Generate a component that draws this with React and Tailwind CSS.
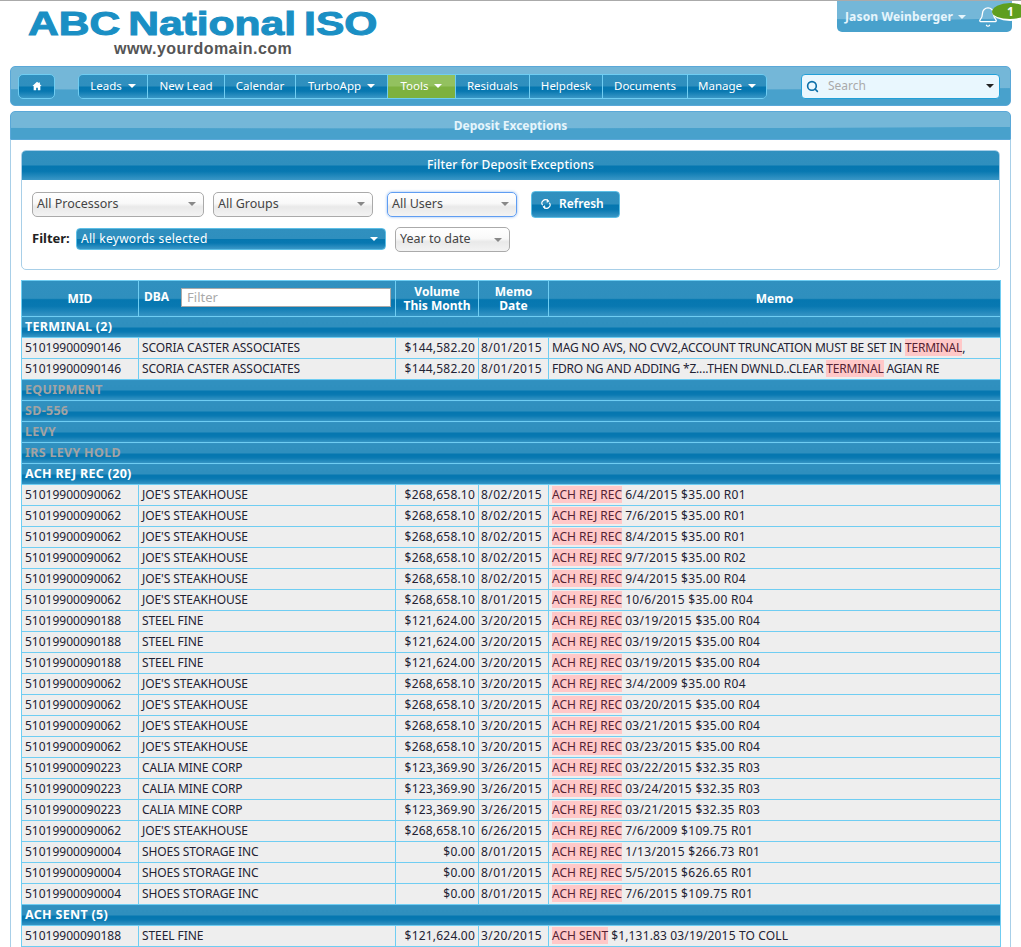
import { Bell, Search } from 'lucide-react';

const gloss = 'bg-[linear-gradient(180deg,#3090bf_0%,#2f8fbe_48%,#0577b0_52%,#0878b1_70%,#3a97c6_100%)]';
const wave = 'bg-[radial-gradient(ellipse_150%_62%_at_40%_0%,#74b7d8_96%,#48a1cc_100%)]';

const navItems = [
  { label: 'Leads', w: 'w-[68px]', caret: true },
  { label: 'New Lead', w: 'w-[77px]' },
  { label: 'Calendar', w: 'w-[71px]' },
  { label: 'TurboApp', w: 'w-[92px]', caret: true },
  { label: 'Tools', w: 'w-[68px]', caret: true, active: true },
  { label: 'Residuals', w: 'w-[74px]' },
  { label: 'Helpdesk', w: 'w-[73px]' },
  { label: 'Documents', w: 'w-[85px]' },
  { label: 'Manage', w: 'w-[79px]', caret: true },
];

const joe = ['51019900090062', "JOE'S STEAKHOUSE", '$268,658.10'];
const steel = ['51019900090188', 'STEEL FINE', '$121,624.00'];
const calia = ['51019900090223', 'CALIA MINE CORP', '$123,369.90'];
const shoes = ['51019900090004', 'SHOES STORAGE INC', '$0.00'];

const achRows = [
  [joe, '8/02/2015', '6/4/2015 $35.00 R01'],
  [joe, '8/02/2015', '7/6/2015 $35.00 R01'],
  [joe, '8/02/2015', '8/4/2015 $35.00 R01'],
  [joe, '8/02/2015', '9/7/2015 $35.00 R02'],
  [joe, '8/02/2015', '9/4/2015 $35.00 R04'],
  [joe, '8/01/2015', '10/6/2015 $35.00 R04'],
  [steel, '3/20/2015', '03/19/2015 $35.00 R04'],
  [steel, '3/20/2015', '03/19/2015 $35.00 R04'],
  [steel, '3/20/2015', '03/19/2015 $35.00 R04'],
  [joe, '3/20/2015', '3/4/2009 $35.00 R04'],
  [joe, '3/20/2015', '03/20/2015 $35.00 R04'],
  [joe, '3/20/2015', '03/21/2015 $35.00 R04'],
  [joe, '3/20/2015', '03/23/2015 $35.00 R04'],
  [calia, '3/26/2015', '03/22/2015 $32.35 R03'],
  [calia, '3/26/2015', '03/24/2015 $32.35 R03'],
  [calia, '3/26/2015', '03/21/2015 $32.35 R03'],
  [joe, '6/26/2015', '7/6/2009 $109.75 R01'],
  [shoes, '8/01/2015', '1/13/2015 $266.73 R01'],
  [shoes, '8/01/2015', '5/5/2015 $626.65 R01'],
  [shoes, '8/01/2015', '7/6/2015 $109.75 R01'],
];

function Caret({ className = 'border-t-white' }) {
  return <span className={`inline-block w-0 h-0 border-x-[4px] border-x-transparent border-t-[4px] ${className}`} />;
}

function Select({ label, w, focus }) {
  return (
    <div className={`${w} h-[25px] flex items-center justify-between pl-[4px] pr-[7px] rounded-[5px] border text-[12.5px] text-[#444] bg-[linear-gradient(180deg,#ffffff_0%,#f9f9f9_45%,#e9e9e9_60%,#f3f3f3_100%)] ${focus ? 'border-[#5f9df2] shadow-[0_0_3px_#8fb8f0]' : 'border-[#aaaaaa]'}`}>
      <span>{label}</span>
      <Caret className="border-t-[#888888]" />
    </div>
  );
}

function Group({ label, muted }) {
  return (
    <tr className="h-[21px]">
      <td colSpan={5} className={`${gloss} border border-[#6fcdf2] px-[3px] py-0 font-bold text-[12.5px] tracking-[0.3px] leading-none ${muted ? 'text-[#a3a3a3]' : 'text-white'}`}>
        {label}
      </td>
    </tr>
  );
}

function Row({ mid, dba, volume, date, rest }) {
  const cell = 'border border-[#6fcdf2] py-0 overflow-hidden whitespace-nowrap';
  return (
    <tr className="h-[21px] bg-[#eeeeee] text-[#222233]">
      <td className={`${cell} px-[3px]`}>{mid}</td>
      <td className={`${cell} px-[3px] tracking-[-0.08px]`}>{dba}</td>
      <td className={`${cell} px-[3px] text-right tracking-[0.2px]`}>{volume}</td>
      <td className={`${cell} pl-[2px] tracking-[0.45px]`}>{date}</td>
      <td className={`${cell} px-[3px]`}>{rest}</td>
    </tr>
  );
}

const Hit = ({ children }) => <span className="bg-[#ffc8c8] text-[#552233]">{children}</span>;

export default function App() {
  return (
    <div className="h-[947px] overflow-hidden bg-white border-t border-t-[#aaaaaa] font-['Noto_Sans','DejaVu_Sans',sans-serif] text-[12px]">
      <div className="flex h-[65px] pl-[28px] pr-[9px]">
        <div className="pt-[7px]">
          <div className="font-['Liberation_Sans',sans-serif] font-bold text-[#1a8fc4] text-[33px] leading-[32px] [word-spacing:-3px] [-webkit-text-stroke:1px_#1a8fc4] origin-left scale-x-[1.29] whitespace-nowrap">ABC National ISO</div>
          <div className="font-['Liberation_Sans',sans-serif] font-bold text-[#555555] text-[16px] leading-[18px] tracking-[0.45px] ml-[86px]">www.yourdomain.com</div>
        </div>
        <div className={`${wave} relative ml-auto w-[175px] h-[31px] rounded-b-[5px] pl-[8px] flex items-center gap-[5px] text-[#e6f5fc] font-bold`}>
          <span className="tracking-[0.15px]">Jason Weinberger</span>
          <Caret className="border-t-[#e6f5fc]" />
          <Bell className="w-[22px] h-[22px] ml-[6px] text-white" strokeWidth={1.4} />
          <span className="absolute left-[155px] top-[2px] w-[36px] h-[18px] rounded-[50%] border-b-2 border-b-white bg-[#5f9e1e] text-white font-bold text-[12px] leading-[18px] pl-[15px]">1</span>
        </div>
      </div>

      <div className="mx-[10px]">
        <div className={`${wave} h-[40px] rounded-[5px] border border-[#5aa8d8] flex items-center pl-[7px] pr-[10px]`}>
          <div className={`${gloss} w-[37px] h-[25px] rounded-[5px] border border-[#6fcdf2] flex items-center justify-center`}>
            <svg viewBox="0 0 12 12" className="w-[10px] h-[10px] fill-white">
              <path d="M6 1 0.5 6h1.5v5h3V8h2v3h3V6h1.5L9.5 3.8V1.8H8v.7z" />
            </svg>
          </div>
          <div className="ml-[23px] flex h-[25px] rounded-[5px] border border-[#6fcdf2] overflow-hidden">
            {navItems.map((item, i) => (
              <div
                key={item.label}
                className={`${item.w} flex items-center justify-center gap-[6px] text-white text-[11.5px] ${i > 0 ? 'border-l border-l-[#6fcdf2]' : ''} ${item.active ? 'bg-[linear-gradient(180deg,#93c15f_0%,#93c15f_48%,#7db13f_52%,#7db13f_100%)]' : gloss}`}
              >
                {item.label}
                {item.caret && <Caret />}
              </div>
            ))}
          </div>
          <div className="ml-auto w-[199px] h-[25px] rounded-[4px] border border-[#22a0d8] bg-[#e9f7fe] flex items-center pl-[4px] pr-[5px] text-[#aaaaaa]">
            <Search className="w-[13px] h-[13px] text-[#0a6ea8]" strokeWidth={3} />
            <span className="ml-[9px]">Search</span>
            <Caret className="ml-auto border-t-[#222222]" />
          </div>
        </div>

        <div className={`${wave} mt-[5px] h-[29px] rounded-t-[5px] border border-[#5aa8d8] flex items-center justify-center font-bold text-[#e6f5fc]`}>
          Deposit Exceptions
        </div>

        <div className="border-x border-x-[#a8cfe8] px-[10px] pt-[10px]">
          <div className="h-[120px] rounded-[5px] border border-[#a8cfe8] overflow-hidden">
            <div className={`${gloss} h-[29px] pb-[2px] flex items-center justify-center text-white font-medium tracking-[0.2px]`}>Filter for Deposit Exceptions</div>
            <div className="pl-[10px] pt-[10px]">
              <div className="flex items-center h-[28px]">
                <Select label="All Processors" w="w-[172px]" />
                <div className="w-[9px]" />
                <Select label="All Groups" w="w-[160px]" />
                <div className="w-[14px]" />
                <Select label="All Users" w="w-[130px]" focus />
                <div className={`${gloss} ml-[14px] w-[89px] h-[27px] rounded-[4px] border border-[#5dbfe6] flex items-center pl-[9px] gap-[8px] text-white font-semibold`}>
                  <svg viewBox="0 0 12 12" className="w-[10px] h-[10px] stroke-white fill-none" strokeWidth="1.4">
                    <path d="M2 7.5A4 4 0 0 1 8.5 2.5M10 4.5A4 4 0 0 1 3.5 9.5" />
                    <path d="M7 0.5 9 2.5 6.8 4M5 8 3 9.5 5.2 11.5" />
                  </svg>
                  Refresh
                </div>
              </div>
              <div className="flex items-center h-[25px] mt-[9px]">
                <span className="font-bold text-[13px] text-[#222222] w-[44px] mb-[2px]">Filter:</span>
                <div className={`${gloss} w-[310px] h-[22px] mb-[2px] rounded-[4px] border border-[#5dbfe6] flex items-center justify-between pl-[4px] pr-[7px] text-white tracking-[0.3px]`}>
                  All keywords selected
                  <Caret />
                </div>
                <div className="w-[9px]" />
                <Select label="Year to date" w="w-[115px]" />
              </div>
            </div>
          </div>

          <table className="mt-[10px] w-[980px] table-fixed border-collapse">
            <colgroup>
              <col className="w-[117px]" />
              <col className="w-[257px]" />
              <col className="w-[83px]" />
              <col className="w-[70px]" />
              <col />
            </colgroup>
            <thead>
              <tr className={`${gloss} h-[36px] text-white font-bold leading-[14px]`}>
                <th className="border border-[#6fcdf2] p-0">MID</th>
                <th className="border border-[#6fcdf2] p-0 pl-[5px] pr-[4px]">
                  <div className="flex items-center pb-[3px]">
                    <span>DBA</span>
                    <input
                      readOnly
                      placeholder="Filter"
                      className="ml-[12px] w-[211px] h-[19px] bg-white border border-[#aaaaaa] px-[5px] font-normal text-[13px] text-[#333333] placeholder:text-[#aaaaaa] outline-none"
                    />
                  </div>
                </th>
                <th className="border border-[#6fcdf2] p-0">Volume<br />This Month</th>
                <th className="border border-[#6fcdf2] p-0">Memo<br />Date</th>
                <th className="border border-[#6fcdf2] p-0">Memo</th>
              </tr>
            </thead>
            <tbody>
              <Group label="TERMINAL (2)" />
              <Row
                mid="51019900090146"
                dba="SCORIA CASTER ASSOCIATES"
                volume="$144,582.20"
                date="8/01/2015"
                rest={<span className="tracking-[-0.2px]">MAG NO AVS, NO CVV2,ACCOUNT TRUNCATION MUST BE SET IN <Hit>TERMINAL</Hit>,</span>}
              />
              <Row
                mid="51019900090146"
                dba="SCORIA CASTER ASSOCIATES"
                volume="$144,582.20"
                date="8/01/2015"
                rest={<span className="tracking-[-0.2px]">FDRO NG AND ADDING *Z....THEN DWNLD..CLEAR <Hit>TERMINAL</Hit> AGIAN RE</span>}
              />
              <Group label="EQUIPMENT" muted />
              <Group label="SD-556" muted />
              <Group label="LEVY" muted />
              <Group label="IRS LEVY HOLD" muted />
              <Group label="ACH REJ REC (20)" />
              {achRows.map(([m, date, text], i) => (
                <Row
                  key={i}
                  mid={m[0]}
                  dba={m[1]}
                  volume={m[2]}
                  date={date}
                  rest={<><Hit>ACH REJ REC</Hit> <span className="tracking-[0.3px]">{text}</span></>}
                />
              ))}
              <Group label="ACH SENT (5)" />
              <Row
                mid={steel[0]}
                dba={steel[1]}
                volume={steel[2]}
                date="3/20/2015"
                rest={<><Hit>ACH SENT</Hit> <span className="tracking-[0.15px]">$1,131.83 03/19/2015 TO COLL</span></>}
              />
            </tbody>
          </table>
        </div>
      </div>
    </div>
  );
}
